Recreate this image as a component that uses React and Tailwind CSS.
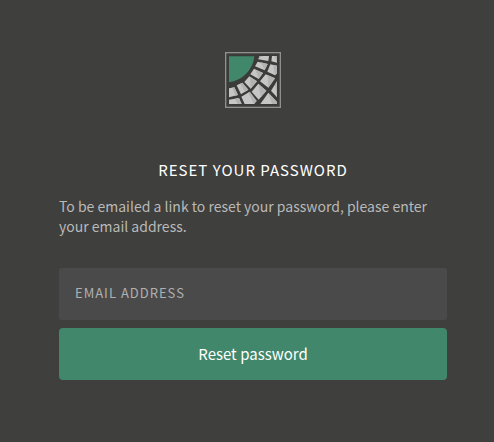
const tiles = [
  ['104,12 132,12 130,27 100,22', '104,12 114,12 100,22'],
  ['141,12 156,12 156,32 139,28', '148,12 156,12 156,32'],
  ['98,29 128,36 119,55 90,43', '108,31 128,36 119,55'],
  ['136,37 156,41 156,64 150,70 127,59', '144,39 156,41 156,64 150,70'],
  ['87,50 114,63 101,81 76,67', '92,53 114,63 101,81'],
  ['122,67 150,79 130,107 105,88', '128,70 150,79 130,107'],
  ['156,88 156,136 138,116', '156,88 156,136 150,98'],
  ['73,73 96,88 77,110 58,90', '75,75 96,88 77,110'],
  ['100,95 124,116 101,143 80,119', '100,95 124,116 108,135'],
  ['130,122 156,150 156,156 106,156', '130,122 156,150 156,156 141,156'],
  ['35,100 52,92 70,113 48,127', '46,95 52,92 70,113 60,119'],
  ['49,134 74,119 95,147 87,156 59,156', '70,122 74,119 95,147 87,156'],
  ['12,109 28,106 39,129 12,136', '22,107 28,106 39,129 31,131'],
  ['12,143 42,138 50,156 12,156', '30,140 42,138 50,156 38,156'],
];

function Logo() {
  return (
    <svg
      role="img"
      aria-label="Logo"
      viewBox="0 0 168 168"
      className="size-14"
    >
      <rect x="2" y="2" width="164" height="164" fill="#3b3b39" stroke="#90908e" strokeWidth="4" />
      <path d="M12 13H88C84 53 53 86 12 91Z" fill="#40876b" />
      {tiles.map(([shape, shade]) => (
        <g key={shape}>
          <polygon points={shape} fill="#c6c6c6" />
          <polygon points={shade} fill="#b3b3b3" />
        </g>
      ))}
    </svg>
  );
}

export default function App() {
  return (
    <main className="min-h-screen bg-[#3f3f3d] pt-[52px] pr-[47px] pb-[62px] pl-[59px] font-['Noto_Sans_CJK_SC',sans-serif] text-[15px] leading-5">
      <div className="flex justify-center">
        <Logo />
      </div>
      <h1 className="mt-[52px] text-center tracking-[1px] text-white uppercase">
        Reset your password
      </h1>
      <p className="mt-4 text-[14px] text-[#b9b9b8]">
        To be emailed a link to reset your password, please enter your email address.
      </p>
      <form className="mt-8 flex flex-col gap-2" onSubmit={(e) => e.preventDefault()}>
        <input
          type="email"
          aria-label="Email address"
          placeholder="EMAIL ADDRESS"
          className="h-[52px] w-full rounded-xs bg-[#4a4a4a] px-4 pb-1 text-[13px] tracking-[1px] text-white outline-none placeholder:text-[#b0b0b0]"
        />
        <button type="submit" className="h-[52px] w-full rounded bg-[#40876b] text-white">
          Reset password
        </button>
      </form>
    </main>
  );
}
